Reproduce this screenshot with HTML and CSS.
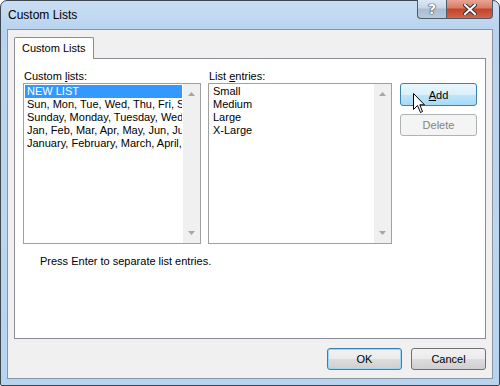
FILE: index.html
```html
<!DOCTYPE html>
<html lang="en">
<head>
    <meta charset="UTF-8">
    <title>Custom Lists</title>
    <link rel="stylesheet" href="styles.css">
</head>
<body>
    <div class="window">
        <div class="titlebar">
            <span class="title">Custom Lists</span>
            <div class="caption">
                <span class="cap help">?</span>
                <span class="cap close">
                    <svg width="14" height="11" viewBox="0 0 14 11"><path d="M2 1 L12 10 M12 1 L2 10" stroke="#333" stroke-width="4" stroke-linecap="square"/><path d="M2 1 L12 10 M12 1 L2 10" stroke="#fff" stroke-width="2" stroke-linecap="square"/></svg>
                </span>
            </div>
        </div>
        <div class="client">
            <div class="tabs"><span class="tab">Custom Lists</span></div>
            <div class="panel">
                <div class="panel-row">
                    <div class="col col-left">
                        <div class="label">Custom <u>l</u>ists:</div>
                        <div class="listbox">
                            <ul class="items">
                                <li class="sel">NEW LIST</li>
                                <li>Sun, Mon, Tue, Wed, Thu, Fri, Sat</li>
                                <li>Sunday, Monday, Tuesday, Wednesday, Thursday</li>
                                <li>Jan, Feb, Mar, Apr, May, Jun, Jul, Aug</li>
                                <li>January, February, March, April, May</li>
                            </ul>
                            <div class="scrollbar">
                                <svg width="7" height="4" viewBox="0 0 7 4"><path d="M0 4 L3.5 0 L7 4 Z" fill="#a6a6a6"/></svg>
                                <svg width="7" height="4" viewBox="0 0 7 4"><path d="M0 0 L7 0 L3.5 4 Z" fill="#a6a6a6"/></svg>
                            </div>
                        </div>
                    </div>
                    <div class="col col-right">
                        <div class="label">List <u>e</u>ntries:</div>
                        <div class="listbox">
                            <ul class="items">
                                <li>Small</li>
                                <li>Medium</li>
                                <li>Large</li>
                                <li>X-Large</li>
                            </ul>
                            <div class="scrollbar">
                                <svg width="7" height="4" viewBox="0 0 7 4"><path d="M0 4 L3.5 0 L7 4 Z" fill="#a6a6a6"/></svg>
                                <svg width="7" height="4" viewBox="0 0 7 4"><path d="M0 0 L7 0 L3.5 4 Z" fill="#a6a6a6"/></svg>
                            </div>
                        </div>
                    </div>
                    <div class="side-buttons">
                        <span class="btn hot"><u>A</u>dd</span>
                        <span class="btn disabled">Delete</span>
                    </div>
                </div>
                <div class="hint">Press Enter to separate list entries.</div>
            </div>
            <div class="footer">
                <span class="btn focus">OK</span>
                <span class="btn">Cancel</span>
            </div>
        </div>
        <svg class="cursor" width="13" height="20" viewBox="0 0 13 20"><path d="M0.5 0.5 L0.5 16.5 L4.5 12.5 L7.5 19.5 L9.5 18.5 L6.8 11.8 L11.5 11.8 Z" fill="#fff" stroke="#000" stroke-width="1" stroke-linejoin="miter"/></svg>
    </div>
</body>
</html>
```

FILE: styles.css
```css
*{
    margin:0; padding: 0; box-sizing: border-box;
}
body {
    font-family: "Liberation Sans", Arial, sans-serif; font-size: 11px; color: #000; background: #fff;
}
.window {
    width: 500px; height: 386px; position: relative; display: flex; flex-direction: column; padding: 0 6px 6px 6px;
    border: 1px solid #3e4650; border-radius: 7px 7px 2px 2px;
    background: linear-gradient(to bottom, #c9def4 0, #b9d3ee 30px, #bcd6f0 60%, #b6d3f0 100%);
}
.titlebar {
    height: 28px; display: flex; justify-content: space-between; align-items: flex-start; padding-left: 1px;
}
.title {
    font-size: 12px; line-height: 28px; color: #000;
}
.caption { display: flex; }
.cap {
    height: 19px; margin-top: -1px; display: flex; align-items: center; justify-content: center; border: 1px solid #4f5b6a; border-top: none;
}
.help {
    width: 29px; border-radius: 0 0 0 4px; border-right: none; font: bold 14px "DejaVu Sans", sans-serif; color: #fff;
    text-shadow: 0 0 1px #333, 0 0 1px #333, 0 0 1px #333;
    background: linear-gradient(to bottom, #dde8f3 0, #c7d6e6 45%, #a9bcd1 50%, #b8cadc 100%);
}
.close {
    width: 47px; border-radius: 0 0 4px 0;
    background: linear-gradient(to bottom, #e8a493 0, #d97a64 45%, #c3432a 50%, #d4654b 100%);
}
.client {
    flex: 1; border: 1px solid #8c96a3; background: #f0f0f0; padding-top: 7px; display: flex; flex-direction: column;
}
.tabs { display: flex; padding-left: 6px; position: relative; z-index: 2; }
.tab {
    width: 80px; height: 22px; margin-bottom: -1px; background: #fff; border: 1px solid #898c95; border-bottom: none;
    border-radius: 2px 2px 0 0; padding-left: 7px; line-height: 20px;
}
.panel {
    height: 281px; margin: 0 6px; background: #fff; border: 1px solid #898c95; padding: 10px 0 0 8px;
}
.panel-row { display: flex; }
.col { display: flex; flex-direction: column; }
.col-left { width: 178px; }
.col-right { width: 184px; margin-left: 7px; }
.label { line-height: 14px; padding-left: 1px; }
.label u, .btn u { text-decoration: underline; }
.listbox {
    height: 161px; border: 1px solid #a0a0a0; display: flex; overflow: hidden;
}
.items {
    flex: 1; list-style: none; overflow: hidden; padding: 1px 1px 0 1px;
}
.items li {
    height: 13px; line-height: 13px; padding-left: 2px; white-space: nowrap; overflow: hidden;
}
.items li.sel { background: #3399ff; color: #fff; }
.col-right .items li { padding-left: 3px; }
.scrollbar {
    width: 17px; background: #f0f0f0; display: flex; flex-direction: column; justify-content: space-between; align-items: center; padding: 8px 0 8px 0;
}
.side-buttons { display: flex; flex-direction: column; gap: 8px; margin: 14px 0 0 8px; }
.btn {
    width: 75px; height: 22px; display: flex; align-items: center; justify-content: center; border: 1px solid #707070; border-radius: 3px;
    background: linear-gradient(to bottom, #f2f2f2 0, #ebebeb 50%, #dddddd 51%, #cfcfcf 100%);
}
.side-buttons .btn { width: 77px; }
.hot {
    height: 23px; border-color: #3c7fb1;
    background: linear-gradient(to bottom, #eaf6fd 0, #d9f0fc 50%, #bee6fd 51%, #a7d9f5 100%);
}
.disabled {
    color: #838383; border-color: #adb2b5; background: #f4f4f4;
}
.hint { margin-top: 10px; padding-left: 17px; line-height: 14px; }
.footer { display: flex; justify-content: flex-end; gap: 9px; margin-top: 9px; padding-right: 6px; }
.focus {
    border-color: #3c7fb1; box-shadow: inset 0 0 0 1px #9fd5f5;
}
.cursor { position: absolute; left: 412px; top: 92px; z-index: 5; }
```
